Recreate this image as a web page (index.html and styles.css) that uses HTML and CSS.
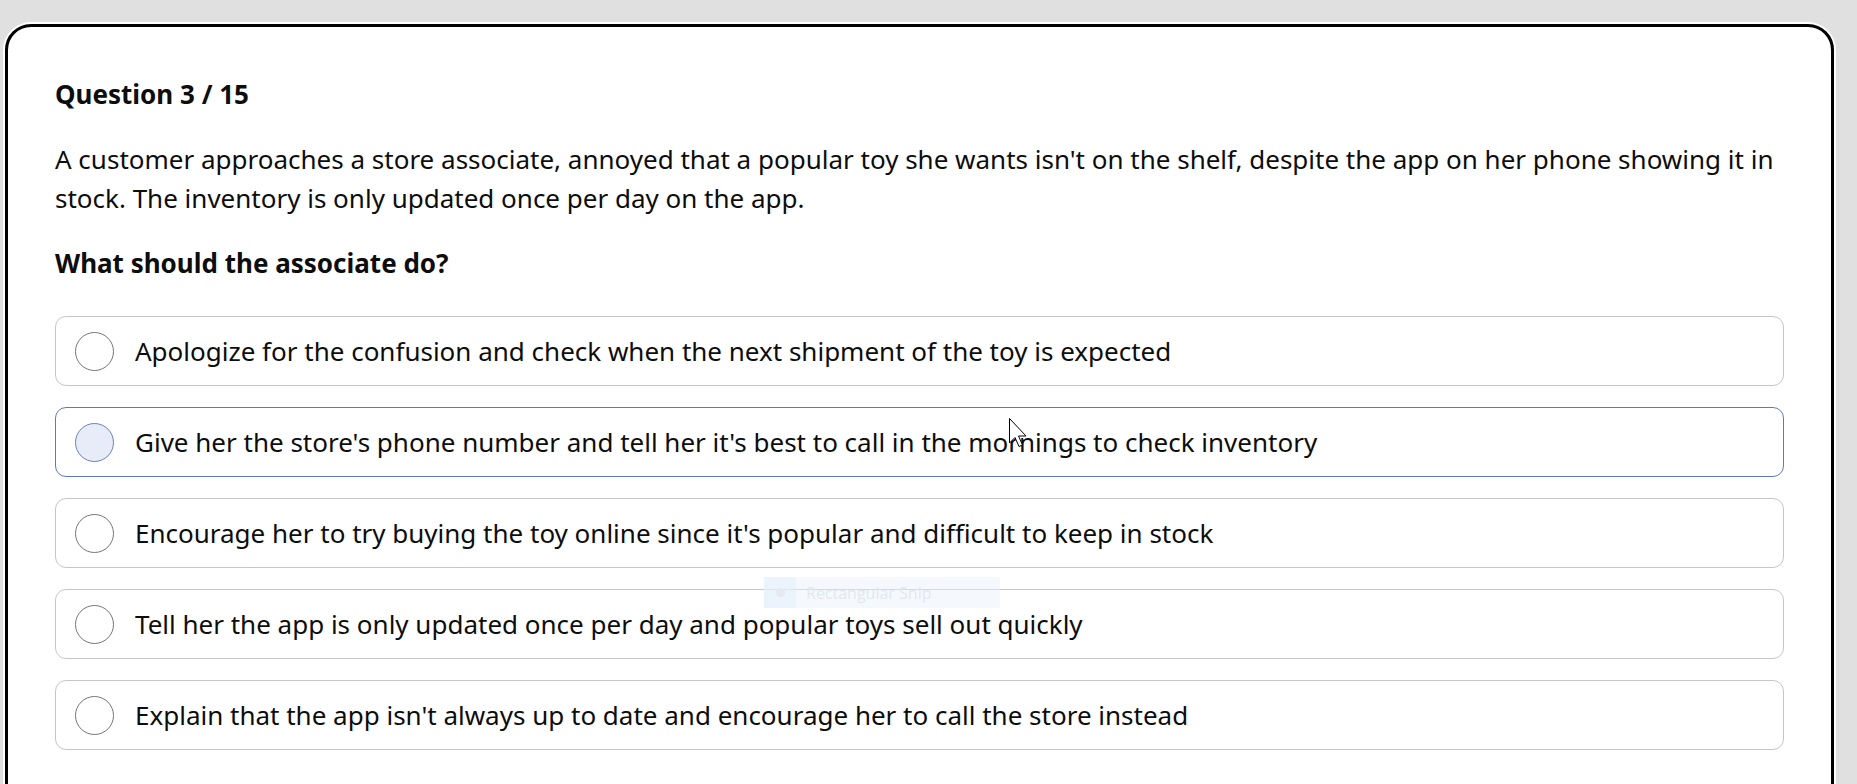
FILE: index.html
```html
<!DOCTYPE html>
<html lang="en">
<head>
<meta charset="utf-8">
<title>Question 3 / 15</title>
<link rel="stylesheet" href="styles.css">
</head>
<body>
<main class="card">
  <h2 class="q-count">Question 3 / 15</h2>
  <p class="scenario">A customer approaches a store associate, annoyed that a popular toy she wants isn't on the shelf, despite the app on her phone showing it in stock. The inventory is only updated once per day on the app.</p>
  <h3 class="prompt">What should the associate do?</h3>
  <ul class="options">
    <li class="option"><span class="radio"></span><span class="label">Apologize for the confusion and check when the next shipment of the toy is expected</span></li>
    <li class="option hover"><span class="radio"></span><span class="label">Give her the store's phone number and tell her it's best to call in the mornings to check inventory</span></li>
    <li class="option"><span class="radio"></span><span class="label">Encourage her to try buying the toy online since it's popular and difficult to keep in stock</span></li>
    <li class="option"><span class="radio"></span><span class="label">Tell her the app is only updated once per day and popular toys sell out quickly</span></li>
    <li class="option"><span class="radio"></span><span class="label">Explain that the app isn't always up to date and encourage her to call the store instead</span></li>
  </ul>
</main>
<div class="snip"><span class="snip-icon"><span class="snip-dot"></span></span><span class="snip-text">Rectangular Snip</span></div>
<svg class="cursor" width="20" height="30" viewBox="0 0 20 30"><path d="M0.5 0.5 L0.5 25 L6 19.5 L10 28.5 L13.5 27 L9.5 18 L17 18 Z" fill="#fff" stroke="#000" stroke-width="1" stroke-linejoin="miter"/></svg>
</body>
</html>
```

FILE: styles.css
```css
* { box-sizing: border-box; }
html, body { margin: 0; padding: 0; }
body {
  background: #e0e0e0;
  font-family: "Noto Sans", "Open Sans", sans-serif;
  color: #0d0d0d;
  height: 784px;
  overflow: hidden;
  position: relative;
}
.card {
  margin: 24px 23px 0 5px;
  background: #fff;
  border: 3px solid #000;
  border-radius: 26px;
  box-shadow: 0 0 0 2px #fff;
  padding: 49px 47px 120px 47px;
}
.q-count {
  margin: 0;
  font-size: 26px;
  line-height: 36px;
  font-weight: 700;
}
.scenario {
  margin: 28px 0 0;
  font-size: 26px;
  line-height: 39px;
  font-weight: 400;
}
.prompt {
  margin: 27px 0 0;
  font-size: 26px;
  line-height: 36px;
  font-weight: 700;
}
.options {
  list-style: none;
  margin: 35px 0 0;
  padding: 0;
  display: flex;
  flex-direction: column;
  gap: 21px;
}
.option {
  height: 70px;
  border: 1px solid #c6c6c6;
  border-radius: 11px;
  display: flex;
  align-items: center;
  padding-left: 19px;
  gap: 21px;
  font-size: 26px;
}
.option.hover { border-color: #5f7bb5; }
.radio {
  width: 39px;
  height: 39px;
  flex: none;
  border-radius: 50%;
  border: 1.5px solid #767676;
  background: #fff;
}
.option.hover .radio {
  border-color: #6883bd;
  background: #e8ecf8;
}
.label { white-space: nowrap; }
.snip {
  position: absolute;
  left: 764px;
  top: 577px;
  width: 236px;
  height: 31px;
  background: rgba(232, 242, 253, 0.45);
  display: flex;
  align-items: center;
  font-family: "Open Sans", "Noto Sans", sans-serif;
  font-size: 16px;
  color: #e3e8ee;
}
.snip-icon {
  width: 32px;
  height: 100%;
  background: rgba(225, 238, 252, 0.5);
  display: flex;
  align-items: center;
  justify-content: center;
}
.snip-dot {
  width: 9px;
  height: 9px;
  border-radius: 50%;
  background: #e6e9ed;
}
.snip-text { margin-left: 10px; }
.cursor {
  position: absolute;
  left: 1009px;
  top: 418px;
}
```
